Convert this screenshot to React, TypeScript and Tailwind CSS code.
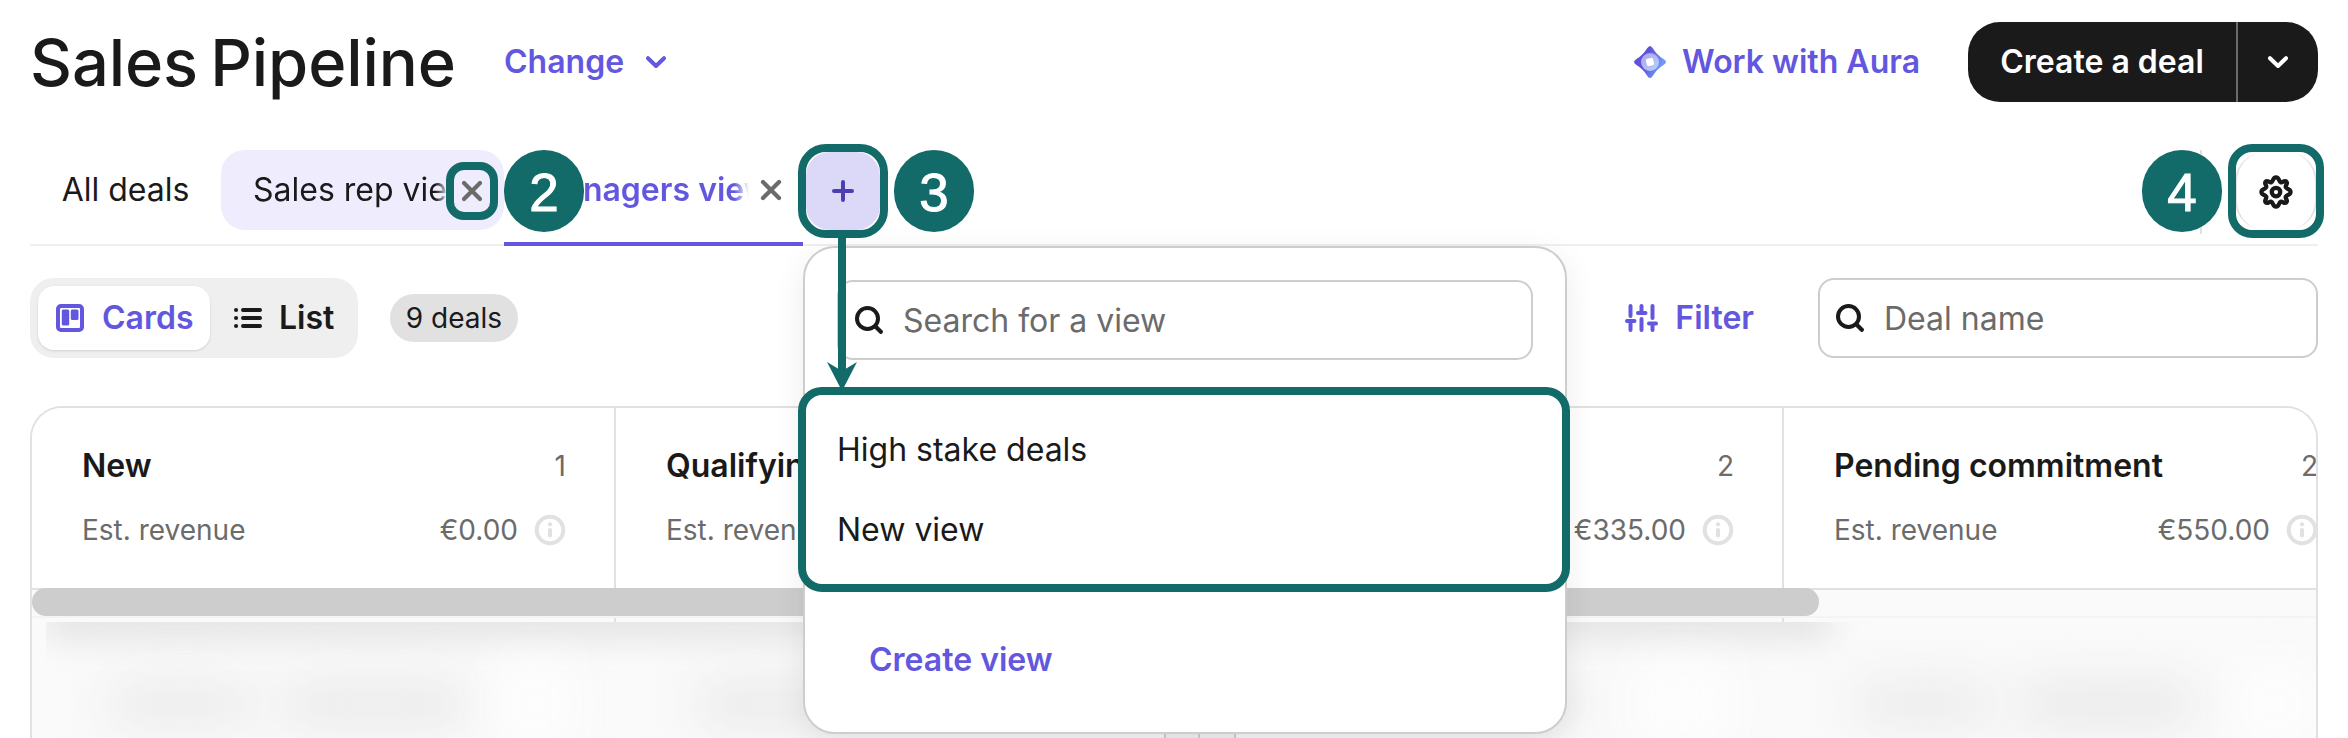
import type { ReactNode } from 'react';

interface IColumn {
  title: string;
  count: number;
  revenue: string;
}

const COLUMNS: IColumn[] = [
  { title: 'New', count: 1, revenue: '€0.00' },
  { title: 'Qualifying', count: 3, revenue: '€120.00' },
  { title: 'Negotiation', count: 2, revenue: '€335.00' },
  { title: 'Pending commitment', count: 2, revenue: '€550.00' },
];

function ChevronIcon() {
  return (
    <svg width="24" height="24" viewBox="0 0 24 24" fill="none">
      <path
        d="M4 8.2l8 7.800 8-7.800"
        stroke="currentColor"
        strokeWidth="4"
        strokeLinecap="round"
        strokeLinejoin="round"
      />
    </svg>
  );
}

function CloseIcon() {
  return (
    <svg width="24" height="24" viewBox="0 0 24 24" fill="none">
      <path
        d="M4 4l16 16M20 4l-16 16"
        stroke="#6b6b6b"
        strokeWidth="4.200"
        strokeLinecap="round"
      />
    </svg>
  );
}

function SearchIcon() {
  return (
    <svg className="shrink-0" width="28" height="28" viewBox="0 0 28 28" fill="none">
      <circle cx="12.500" cy="12.500" r="10.500" stroke="#1a1a1a" strokeWidth="4" />
      <path d="M20.500 20.500l5.300 5.300" stroke="#1a1a1a" strokeWidth="4.200" strokeLinecap="round" />
    </svg>
  );
}

function InfoIcon() {
  return (
    <svg className="shrink-0" width="32" height="32" viewBox="0 0 32 32" fill="none">
      <circle cx="16" cy="16" r="13.300" stroke="#e1e1e1" strokeWidth="4" />
      <path d="M16 16v5.500" stroke="#e1e1e1" strokeWidth="4" strokeLinecap="round" />
      <circle cx="16" cy="10.300" r="2.100" fill="#e1e1e1" />
    </svg>
  );
}

function AuraIcon() {
  return (
    <svg width="34" height="34" viewBox="0 0 34 34">
      <defs>
        <linearGradient id="aura" x1="0" y1="0.3" x2="1" y2="0.7">
          <stop offset="0.35" stopColor="#5f52d6" />
          <stop offset="0.85" stopColor="#6f98f8" />
        </linearGradient>
        <linearGradient id="auraInner" x1="0" y1="0" x2="1" y2="1">
          <stop offset="0" stopColor="#a9a3ee" />
          <stop offset="1" stopColor="#b9d2fd" />
        </linearGradient>
      </defs>
      <path
        d="M17 1Q18.500 1 20 3.500Q24 10 30.500 14Q33 15.500 33 17Q33 18.500 30.500 20Q24 24 20 30.500Q18.500 33 17 33Q15.500 33 14 30.500Q10 24 3.500 20Q1 18.500 1 17Q1 15.500 3.500 14Q10 10 14 3.500Q15.500 1 17 1Z"
        fill="url(#aura)"
      />
      <circle cx="17" cy="17" r="9" fill="url(#auraInner)" />
      <rect x="13.300" y="13.300" width="7.400" height="7.400" rx="1.800" fill="white" transform="rotate(-14 17 17)" />
    </svg>
  );
}

function GearIcon() {
  return (
    <svg width="34" height="34" viewBox="0 0 24 24" fill="none" stroke="#1a1a1a" strokeWidth="3" strokeLinejoin="round">
      <path d="M12 1.700C14.400 1.700 13.800 4.500 15.300 5.100C16.800 5.700 17.800 3.400 19.300 4.700C20.700 6.200 18.300 7.300 18.900 8.700C19.500 10.200 22.300 9.600 22.300 12C22.300 14.400 19.500 13.800 18.900 15.300C18.300 16.700 20.700 17.800 19.300 19.300C17.800 20.700 16.800 18.300 15.300 18.900C13.800 19.500 14.400 22.300 12 22.300C9.600 22.300 10.200 19.500 8.700 18.900C7.300 18.300 6.200 20.700 4.700 19.300C3.400 17.800 5.700 16.700 5.100 15.300C4.500 13.800 1.700 14.400 1.700 12C1.700 9.600 4.500 10.200 5.100 8.700C5.700 7.300 3.400 6.200 4.700 4.700C6.200 3.400 7.300 5.700 8.700 5.100C10.200 4.500 9.600 1.700 12 1.700Z" />
      <circle cx="12" cy="12" r="3" />
    </svg>
  );
}

function StepBadge({ children }: { children: ReactNode }) {
  return (
    <div className="flex h-[82px] w-[80px] items-center justify-center rounded-full bg-[#126b69] pt-[2px] font-['Liberation_Sans',sans-serif] text-[53px] leading-none text-white [-webkit-text-stroke:1px_white]">
      {children}
    </div>
  );
}

function Header() {
  return (
    <div className="flex h-[80px] items-center">
      <h1 className="w-[474px] text-[65px] leading-none font-medium tracking-[-0.1px] whitespace-nowrap [word-spacing:-5px]">
        Sales Pipeline
      </h1>
      <button className="flex items-center gap-[20px] font-semibold text-[#6257de]">
        Change
        <ChevronIcon />
      </button>
      <div className="ml-auto flex items-center">
        <button className="mr-[48px] flex items-center gap-[15px] font-semibold text-[#6257de]">
          <AuraIcon />
          Work with Aura
        </button>
        <div className="flex h-[80px] w-[350px] overflow-hidden rounded-[32px] bg-[#1a1a1a] font-semibold text-white">
          <button className="w-[270px] border-r-2 border-[#6b6b6b]">Create a deal</button>
          <button className="flex flex-1 items-center justify-center">
            <ChevronIcon />
          </button>
        </div>
      </div>
    </div>
  );
}

function Tabs() {
  return (
    <div className="mt-[48px] flex h-[96px] items-start border-b-2 border-[#efefef]">
      <button className="h-[80px] w-[191px]">All deals</button>
      <div className="relative flex h-[80px] w-[283px] items-center rounded-[24px] bg-[#efedfd] pl-[32px]">
        <span className="w-[196px] overflow-hidden bg-linear-to-r from-[#1a1a1a] from-93% to-transparent bg-clip-text whitespace-nowrap text-transparent">
          Sales rep view
        </span>
        <div className="absolute top-[12px] left-[225px] flex h-[58px] w-[52px] items-center justify-center rounded-[18px] border-8 border-[#126b69] bg-[#efedfd]">
          <CloseIcon />
        </div>
      </div>
      <div className="relative flex h-[96px] w-[299px] border-b-4 border-[#6257de]">
        <div className="flex h-[80px] items-center">
          <span className="ml-[31px] w-[214px] overflow-hidden bg-linear-to-r from-[#6257de] from-93% to-transparent bg-clip-text font-semibold whitespace-nowrap text-transparent">
            Managers view
          </span>
          <div className="ml-[10px]">
            <CloseIcon />
          </div>
        </div>
        <div className="absolute top-0 left-0">
          <StepBadge>2</StepBadge>
        </div>
      </div>
      <div className="-mt-[6px] -ml-[5px] flex h-[94px] w-[90px] items-center justify-center rounded-[28px] border-8 border-[#126b69]">
        <div className="flex h-full w-full items-center justify-center rounded-[24px] bg-[#dcd8f8]">
          <svg width="24" height="24" viewBox="0 0 24 24">
            <path d="M12 3v18M3 12h18" stroke="#4c3fb0" strokeWidth="4" strokeLinecap="round" />
          </svg>
        </div>
      </div>
      <div className="ml-[6px]">
        <StepBadge>3</StepBadge>
      </div>
      <div className="-mr-[6px] ml-auto flex">
        <div className="relative mr-[6px]">
          <div className="absolute top-0 left-[58px] h-[84px] w-[2px] bg-[#e1e1e1]" />
          <div className="relative">
            <StepBadge>4</StepBadge>
          </div>
        </div>
        <div className="-mt-[6px] h-[94px] w-[96px] overflow-hidden rounded-[24px] border-8 border-[#126b69]">
          <div className="-ml-[1px] flex h-[78px] w-[82px] items-center justify-center rounded-[30px] border-x-2 border-[#e1e1e1] pt-[2px]">
            <GearIcon />
          </div>
        </div>
      </div>
    </div>
  );
}

function Toolbar() {
  return (
    <div className="mt-[32px] flex h-[80px] items-center">
      <div className="flex h-[80px] w-[328px] rounded-[24px] bg-[#efefef] p-[8px] font-semibold">
        <button className="flex w-[172px] items-center gap-[18px] rounded-[16px] bg-white pl-[18px] text-[#6257de] shadow-sm">
          <svg width="28" height="28" viewBox="0 0 28 28" fill="none">
            <rect x="2" y="2" width="24" height="24" rx="3" stroke="currentColor" strokeWidth="4" />
            <rect x="5.800" y="5.500" width="7.400" height="16" rx="1.500" fill="currentColor" />
            <rect x="14.800" y="5.500" width="7.700" height="10.500" rx="1.500" fill="currentColor" />
          </svg>
          Cards
        </button>
        <button className="ml-[24px] flex items-center gap-[17px]">
          <svg width="28" height="28" viewBox="0 0 28 28" stroke="currentColor" strokeWidth="4" strokeLinecap="round">
            <path d="M9 6h17M9 14h17M9 22h17" />
            <path d="M2 6h.1M2 14h.1M2 22h.1" />
          </svg>
          List
        </button>
      </div>
      <span className="ml-[32px] flex h-[48px] w-[128px] items-center justify-center rounded-full bg-[#e1e1e1] text-[28px]">
        9 deals
      </span>
      <button className="mr-[64px] ml-auto flex items-center gap-[17px] font-semibold text-[#6257de]">
        <svg width="34" height="28" viewBox="0 0 34 28" stroke="currentColor" strokeWidth="4" strokeLinecap="round">
          <path d="M6.500 2v10M6.500 19v7M3 17h7.500M17.500 2v6M17.500 15v11M14 9h7.500M28.500 2v12M28.500 22v4M25 19.500h7" />
        </svg>
        Filter
      </button>
      <div className="flex h-[80px] w-[500px] items-center gap-[20px] rounded-[16px] border-2 border-[#cdcdcd] pl-[16px] text-[#6b6b6b]">
        <SearchIcon />
        <span className="pt-[2px]">Deal name</span>
      </div>
    </div>
  );
}

// card contents are hidden behind a blur
function BlurredCards() {
  return (
    <div className="relative ml-[14px] h-[116px] overflow-hidden bg-[#fafafa]">
      <div className="-mt-[20px] h-[36px] w-[1785px] bg-[#e2e2e2] blur-lg" />
      <div className="mt-[26px] flex h-[80px] items-center">
        <div className="ml-[60px] h-[44px] w-[150px] shrink-0 rounded-full bg-[#ebebeb] blur-xl" />
        <div className="ml-[24px] h-[46px] w-[190px] shrink-0 rounded-full bg-[#eaeaea] blur-xl" />
        <div className="ml-[24px] h-[80px] w-[80px] shrink-0 bg-[#fdfdfd] blur-xl" />
        <div className="ml-[120px] h-[46px] w-[884px] shrink-0 rounded-full bg-[#eaeaea] blur-xl" />
        <div className="ml-[55px] h-[80px] w-[100px] shrink-0 bg-[#fdfdfd] blur-xl" />
        <div className="ml-[120px] h-[44px] w-[140px] shrink-0 rounded-full bg-[#ebebeb] blur-xl" />
        <div className="ml-[24px] h-[46px] w-[180px] shrink-0 rounded-full bg-[#e9e9e9] blur-xl" />
        <div className="ml-[40px] h-[80px] w-[80px] shrink-0 bg-[#fdfdfd] blur-xl" />
      </div>
      <div className="absolute bottom-0 left-[1118px] flex h-[8px] w-[72px] justify-between border-x-2 border-[#cdcdcd] bg-[#efefef]">
        <div className="ml-[32px] w-[2px] bg-[#cdcdcd]" />
      </div>
    </div>
  );
}

function Board() {
  return (
    <div className="mt-[48px] h-[332px] overflow-hidden rounded-t-[32px] border-2 border-b-0 border-[#e1e1e1] bg-[#fafafa]">
      <div className="flex h-[180px] bg-white">
        {COLUMNS.map((column) => (
          <div key={column.title} className="w-[584px] shrink-0 border-r-2 border-[#e1e1e1] pt-[36px] pr-[48px] pl-[50px]">
            <div className="flex h-[44px] items-center justify-between">
              <h2 className="font-semibold">{column.title}</h2>
              <span className="text-[28px] text-[#6b6b6b]">{column.count}</span>
            </div>
            <div className="mt-[20px] flex h-[44px] items-center text-[28px] text-[#6b6b6b]">
              Est. revenue
              <span className="mr-[16px] ml-auto">{column.revenue}</span>
              <InfoIcon />
            </div>
          </div>
        ))}
      </div>
      <div className="h-[30px] border-t-2 border-b-2 border-t-[#e1e1e1] border-b-[#f4f4f4]">
        <div className="relative -top-[2px] h-[28px] w-[1787px] rounded-full bg-[#cdcdcd]" />
      </div>
      <div className="flex h-[4px]">
        <div className="w-[584px] border-r-2 border-[#e1e1e1]" />
        <div className="w-[1168px] border-r-2 border-[#e1e1e1]" />
      </div>
      <BlurredCards />
    </div>
  );
}

function ViewMenu() {
  return (
    <div className="absolute top-[246px] left-[803px] h-[488px] w-[764px] rounded-[32px] border-2 border-[#cdcdcd] bg-white pt-[32px] shadow-[0_8px_32px_rgba(0,0,0,0.08)]">
      <div className="mx-[32px] flex h-[80px] items-center gap-[20px] rounded-[16px] border-2 border-[#cdcdcd] pl-[16px] text-[#6b6b6b]">
        <SearchIcon />
        <span className="pt-[2px]">Search for a view</span>
      </div>
      <div className="mt-[27px] -ml-[7px] flex h-[205px] w-[772px] flex-col rounded-[24px] border-8 border-[#126b69] pt-[15px] pl-[31px]">
        <button className="h-[80px] text-left">High stake deals</button>
        <button className="h-[80px] text-left">New view</button>
      </div>
      <button className="mt-[28px] ml-[64px] h-[80px] font-semibold text-[#6257de]">Create view</button>
      <svg className="absolute -top-[10px] left-[20px]" width="34" height="154" viewBox="0 0 34 154" fill="#126b69">
        <path d="M13 0h8v138h-8z" />
        <path d="M2 124l15 9 15-9-15 29z" />
      </svg>
    </div>
  );
}

export default function App() {
  return (
    <div className="relative h-[738px] w-[2348px] overflow-hidden bg-white px-[30px] pt-[22px] font-['Inter',sans-serif] text-[32px] leading-[44px] text-[#1a1a1a]">
      <Header />
      <Tabs />
      <Toolbar />
      <Board />
      <ViewMenu />
    </div>
  );
}
